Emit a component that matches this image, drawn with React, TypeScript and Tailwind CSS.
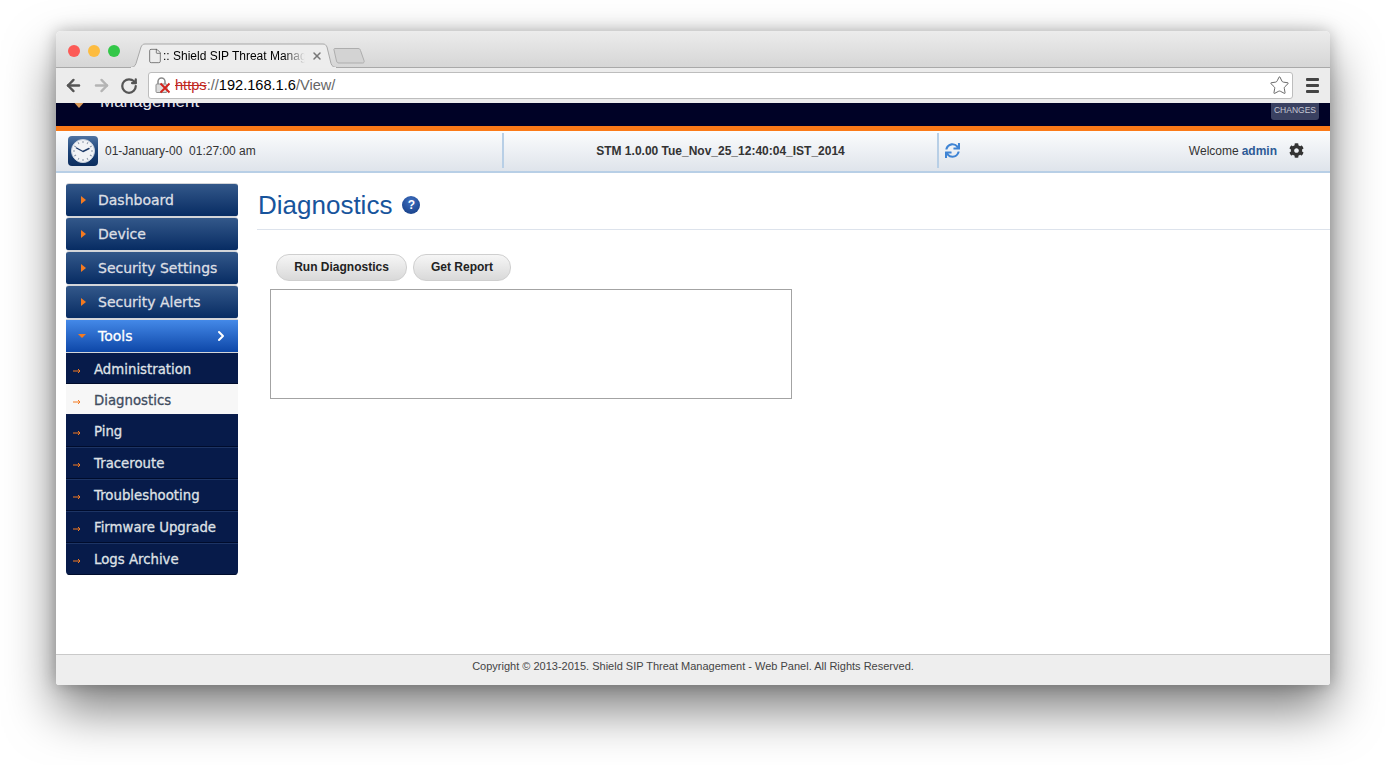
import React from 'react';
import { ArrowLeft, ArrowRight, RotateCw, Star, ChevronRight, File, X } from 'lucide-react';
import { FaCog, FaSync } from 'react-icons/fa';

const TOP_MENU = ['Dashboard', 'Device', 'Security Settings', 'Security Alerts'];
const SUB_MENU = ['Administration', 'Diagnostics', 'Ping', 'Traceroute', 'Troubleshooting', 'Firmware Upgrade', 'Logs Archive'];

function ClockIcon() {
  return (
    <svg width="30" height="30" viewBox="0 0 30 30">
      <defs>
        <linearGradient id="clockBg" x1="0" y1="0" x2="0" y2="1">
          <stop offset="0" stopColor="#4f74a3" />
          <stop offset="0.5" stopColor="#1c4378" />
          <stop offset="1" stopColor="#0c2d5e" />
        </linearGradient>
      </defs>
      <rect width="30" height="30" rx="4" fill="url(#clockBg)" />
      <circle cx="15" cy="15" r="11.5" fill="#f1f3f6" stroke="#c9d2de" />
      {[0, 30, 60, 90, 120, 150, 180, 210, 240, 270, 300, 330].map(a => (
        <rect key={a} x="14.5" y="5" width="1" height="2" fill="#8b97a8" transform={`rotate(${a} 15 15)`} />
      ))}
      <path d="M15 15.5 L8.5 12 M15 15.5 L21 12.5" stroke="#1d3a68" strokeWidth="1.4" strokeLinecap="round" />
    </svg>
  );
}

function HelpIcon() {
  return (
    <span className="flex items-center justify-center w-[18px] h-[18px] rounded-full bg-[radial-gradient(circle_at_50%_30%,#3f6fc0,#123a80)] text-white text-[12px] font-bold leading-none">?</span>
  );
}

function SideArrow() {
  return (
    <svg width="8" height="8" viewBox="0 0 8 8" className="shrink-0 mt-[4px]">
      <path d="M0 4h7M5 2l2 2-2 2" stroke="#f47a20" strokeWidth="1" fill="none" />
    </svg>
  );
}

function BrokenLock() {
  return (
    <svg width="16" height="17" viewBox="0 0 16 17" className="shrink-0">
      <path d="M3 7V4.500a3.500 3.500 0 0 1 7 0V7" fill="none" stroke="#8a8a8a" strokeWidth="1.500" />
      <rect x="1" y="7" width="11" height="8.500" rx="1" fill="#dcdcdc" stroke="#8f8f8f" />
      <path d="M5.500 6.500l9 9M14.500 6.500l-9 9" stroke="#d3231c" strokeWidth="1.900" />
    </svg>
  );
}

function PillButton({ label, width }: { label: string; width: string }) {
  return (
    <button className={`h-[27px] ${width} pb-[2px] rounded-[13px] border border-[#cfcfcf] bg-gradient-to-b from-[#f6f6f6] to-[#d9d9d9] text-[12px] font-bold text-[#222]`}>
      {label}
    </button>
  );
}

export default function App() {
  return (
    <div className="w-[1386px] h-[765px] bg-white overflow-hidden pt-[31px] pl-[56px] font-['Liberation_Sans',Arial,sans-serif]">
      <div className="w-[1274px] h-[654px] flex flex-col rounded-t-[5px] rounded-b-[3px] overflow-hidden bg-white shadow-[0_25px_50px_rgba(0,0,0,0.5),0_0_16px_rgba(0,0,0,0.25)]">

        {/* Browser tab strip */}
        <div className="h-[37px] shrink-0 flex items-end pl-[12px] bg-gradient-to-b from-[#ececec] to-[#d6d6d6] border-b border-[#a9a9a9]">
          <div className="flex gap-[8px] mb-[10px]">
            <span className="w-[12px] h-[12px] rounded-full bg-[#fc5b57]" />
            <span className="w-[12px] h-[12px] rounded-full bg-[#fdbc40]" />
            <span className="w-[12px] h-[12px] rounded-full bg-[#33c748]" />
          </div>
          <div className="relative ml-[10px] -mb-px h-[25px] w-[207px] flex items-center pl-[17px]">
            <svg width="207" height="25" viewBox="0 0 207 25" className="absolute inset-0">
              <path d="M0 24.500c3 0 5-1 6-4L11 4c1-2 2-3 4-3h178c2 0 3 1 4 3l4 16.500c1 3 3 4 6 4z" fill="#ededed" stroke="#a8a8a8" />
              <path d="M1 25h205" stroke="#ededed" strokeWidth="2" />
            </svg>
            <File size={16} strokeWidth={1} className="relative text-[#444] shrink-0" />
            <span className="relative text-[12px] text-black whitespace-nowrap overflow-hidden w-[142px] [mask-image:linear-gradient(to_right,black_85%,transparent)]">:: Shield SIP Threat Management</span>
            <X size={12} strokeWidth={3} className="relative ml-[6px] text-[#777] shrink-0" />
          </div>
          <svg width="33" height="17" viewBox="0 0 33 17" className="-ml-[4px] mb-[3px]">
            <path d="M2 1.500h23c1.500 0 2 .5 2.500 2l3.500 10c.5 1.500 0 2.500-1.500 2.500H6c-1.500 0-2-.5-2.500-2L1 3c-.3-1 0-1.500 1-1.500z" fill="#d3d3d3" stroke="#adadad" />
          </svg>
        </div>

        {/* Browser toolbar */}
        <div className="h-[35px] shrink-0 flex items-center pl-[8px] pr-[10px] bg-[#ececec]">
          <ArrowLeft size={19} strokeWidth={3} className="text-[#555]" />
          <ArrowRight size={19} strokeWidth={3} className="ml-[9px] text-[#b4b4b4]" />
          <RotateCw size={18} strokeWidth={3} className="ml-[9px] text-[#555]" />
          <div className="ml-[10px] w-[1145px] h-[27px] flex items-center pl-[6px] pr-[2px] rounded-[3px] border border-[#bdbdbd] bg-white text-[14.6px]">
            <BrokenLock />
            <span className="ml-[4px] text-[#c0281f] line-through">https</span>
            <span className="text-[#666]">://</span>
            <span className="text-black">192.168.1.6</span>
            <span className="text-[#666]">/View/</span>
            <Star size={21} strokeWidth={1} className="ml-auto text-[#555]" />
          </div>
          <div className="ml-[13px] flex flex-col gap-[3px]">
            <span className="w-[13px] h-[3px] rounded-[1px] bg-[#444]" />
            <span className="w-[13px] h-[3px] rounded-[1px] bg-[#444]" />
            <span className="w-[13px] h-[3px] rounded-[1px] bg-[#444]" />
          </div>
        </div>

        {/* App banner, scrolled so only its bottom edge shows */}
        <div className="h-[23px] shrink-0 bg-[#000226] overflow-hidden flex justify-between pl-[15px] pr-[11px]">
          <div className="flex items-start -mt-[9px]">
            <svg width="16" height="14" viewBox="0 0 16 14" className="mt-[1px]">
              <path d="M0 4h16L8 13z" fill="#d99a5a" />
            </svg>
            <span className="ml-[13px] text-[17px] leading-[16px] text-[#e8e8ee]">Management</span>
          </div>
          <div className="h-[17px] w-[48px] pb-[2px] flex items-center justify-center rounded-b-[3px] bg-[#3a4161] text-[8.5px] text-[#c5c8d4]">CHANGES</div>
        </div>
        <div className="h-[5px] shrink-0 bg-[#fb7a18]" />

        {/* Status bar */}
        <div className="h-[42px] shrink-0 flex items-stretch pt-[2px] pb-[3px] bg-gradient-to-b from-[#fbfcfd] to-[#dfe4eb] border-b-2 border-[#b8cfe6] text-[12px] text-[#333]">
          <div className="w-[448px] flex items-center pl-[12px] border-r-2 border-[#b8cfe6]">
            <ClockIcon />
            <span className="ml-[7px] whitespace-pre">01-January-00  01:27:00 am</span>
          </div>
          <div className="w-[435px] flex items-center justify-center font-bold border-r-2 border-[#b8cfe6]">
            STM 1.0.00 Tue_Nov_25_12:40:04_IST_2014
          </div>
          <div className="flex-1 flex items-center pl-[6px] pr-[26px]">
            <FaSync size={15} className="text-[#3f84d4]" />
            <span className="ml-auto">Welcome</span>
            <span className="ml-[3px] font-bold text-[#2d5a96]">admin</span>
            <FaCog size={15} className="ml-[12px] text-[#333]" />
          </div>
        </div>

        {/* Main area */}
        <div className="flex-1 flex min-h-0">
          <aside className="w-[172px] ml-[10px] mt-[10px] shrink-0 font-['DejaVu_Sans',Verdana,sans-serif] text-[14px] [-webkit-text-stroke:0.3px]">
            {TOP_MENU.map(item => (
              <div key={item} className="h-[34px] flex items-center pl-[15px] border-y border-[#d3d5d9] rounded-[3px] bg-gradient-to-b from-[#33588a] to-[#072c63] text-[#dcdfe4]">
                <span className="w-0 h-0 border-y-[4px] border-y-transparent border-l-[5px] border-l-[#f47a20]" />
                <span className="ml-[12px]">{item}</span>
              </div>
            ))}
            <div className="h-[34px] flex items-center pl-[12px] pr-[9px] border-y border-[#d3d5d9] bg-gradient-to-b from-[#4489e8] to-[#0d47a8] text-white">
              <span className="w-0 h-0 border-x-[4px] border-x-transparent border-t-[4px] border-t-[#f47a20]" />
              <span className="ml-[12px]">Tools</span>
              <ChevronRight size={16} strokeWidth={3} className="ml-auto" />
            </div>
            <div className="rounded-b-[4px] overflow-hidden text-[13.3px]">
              {SUB_MENU.map((item, i) => {
                const active = item === 'Diagnostics';
                return (
                  <div
                    key={item}
                    className={`${i < 2 ? 'h-[31px] pt-[2px]' : 'h-[32px]'} flex items-center pl-[7px] border-b ${active ? 'bg-[#f7f7f7] text-[#3f4d5f] border-[#0b1d4d]' : 'bg-[#071b4a] text-[#dfe1e6] border-[#000c2c]'} ${i > 2 ? 'border-t border-t-[#1d3464]' : ''}`}
                  >
                    <SideArrow />
                    <span className="ml-[13px] pt-[2px]">{item}</span>
                  </div>
                );
              })}
            </div>
          </aside>

          <main className="flex-1 ml-[19px] min-w-0">
            <div className="h-[57px] flex items-center border-b border-[#dde3ec] pt-[8px] pl-[1px]">
              <h1 className="text-[26px] text-[#17549c] leading-none">Diagnostics</h1>
              <span className="ml-[10px]"><HelpIcon /></span>
            </div>
            <div className="pl-[19px] pt-[24px] flex gap-[6px]">
              <PillButton label="Run Diagnostics" width="w-[131px]" />
              <PillButton label="Get Report" width="w-[98px]" />
            </div>
            <div className="ml-[13px] mt-[8px] w-[522px] h-[110px] border border-[#a3a3a3] bg-white" />
          </main>
        </div>

        {/* Footer */}
        <div className="h-[31px] shrink-0 flex items-start justify-center pt-[3px] bg-[#eeeeee] border-t border-[#c9c9c9] text-[11px] text-[#444]">
          Copyright © 2013-2015. Shield SIP Threat Management - Web Panel. All Rights Reserved.
        </div>
      </div>
    </div>
  );
}
